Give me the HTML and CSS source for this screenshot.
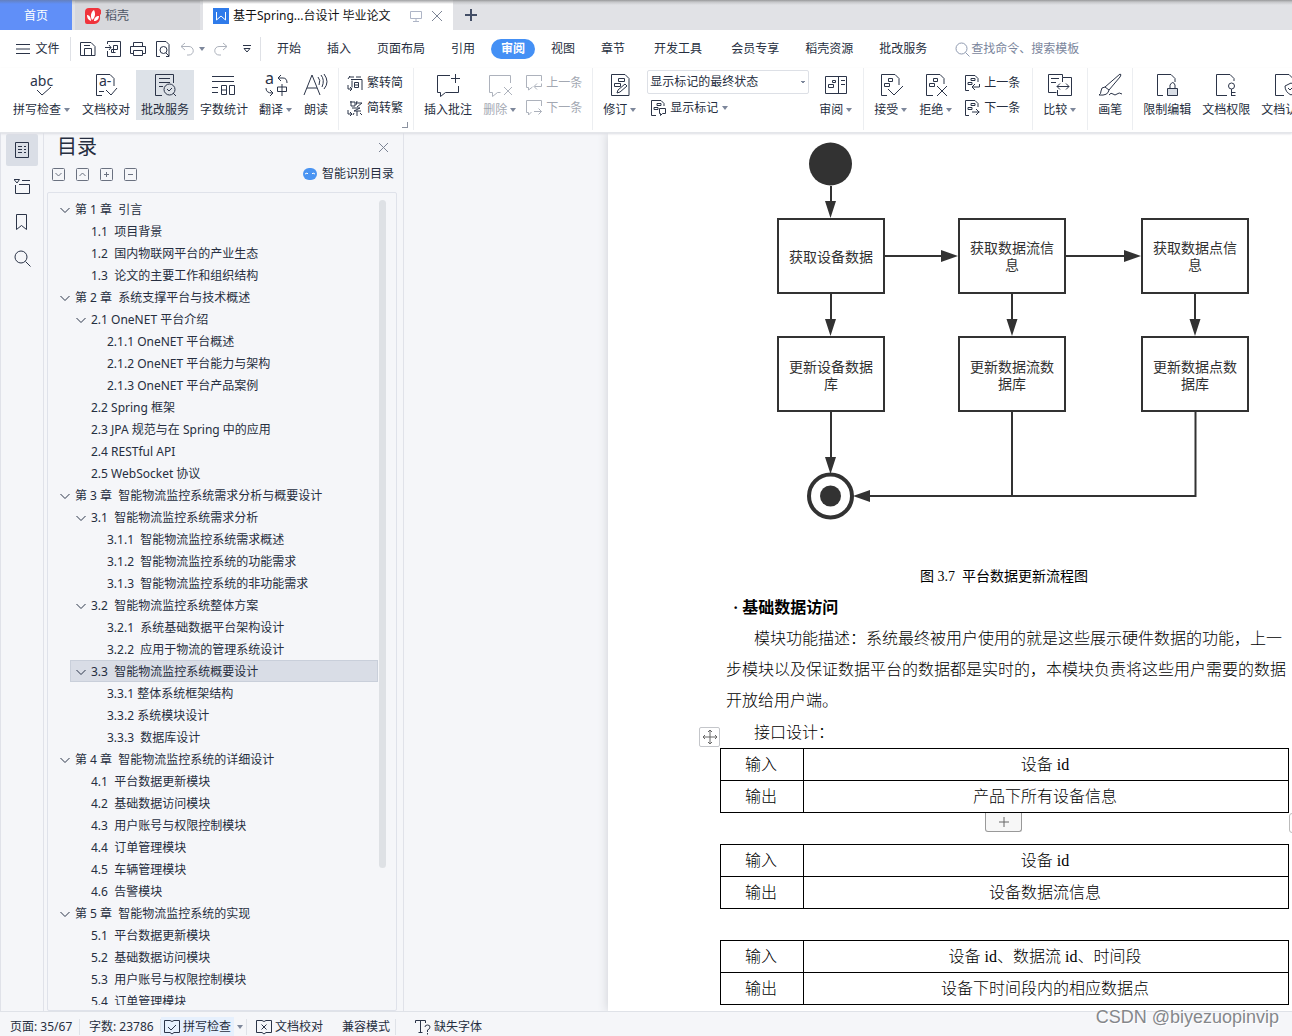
FILE: index.html
```html
<!DOCTYPE html>
<html lang="zh-CN">
<head>
<meta charset="utf-8">
<title>基于Spring...台设计 毕业论文</title>
<link rel="stylesheet" href="styles.css">
</head>
<body>
<svg class="defs" aria-hidden="true">
  <symbol id="chev" viewBox="0 0 10 10"><path d="M.5 3L5 7.500 9.500 3"/></symbol>
  <symbol id="caret" viewBox="0 0 6 4"><path d="M0 0h6L3 4z" fill="#7d879b" stroke="none"/></symbol>
  <symbol id="bubble" viewBox="0 0 24 24"><path d="M14 2.500H1.500v17h3v4l5-4h13V13"/></symbol>
  <symbol id="prev" viewBox="0 0 16 16"><path d="M15.500 6V.500H.500v12h2v2.500l4-3M15.500 8.500v3h-7M11 8.500l-3 3 3 3"/></symbol>
  <symbol id="next" viewBox="0 0 16 16"><path d="M15.500 6V.500H.500v12h2v2.500l3-3M8 11.500h7.500M12.500 8.500l3 3-3 3"/></symbol>
  <symbol id="docprev" viewBox="0 0 16 16"><path d="M5 15.500H1.500V.500H11l3 3V7M7 3.500h4v2H7zM4 7.500h4v2H4zM15.500 9v3H8M11 9l-3 3 3 3"/></symbol>
  <symbol id="docnext" viewBox="0 0 16 16"><path d="M5 15.500H1.500V.500H11l3 3V7M7 3.500h4v2H7zM4 7.500h4v2H4zM8 12h7.500M12 9l3 3-3 3"/></symbol>
</svg>

<header class="tabs">
  <button class="tab home">首页</button>
  <button class="tab docer"><svg width="16" height="16" viewBox="0 0 16 16"><path d="M4 0h8a4 4 0 0 1 3 7v2a6 6 0 0 1-6 7H2a2 2 0 0 1-2-2V4a4 4 0 0 1 4-4z" fill="#f0343c" stroke="none"/><path d="M7 12C5 8 6 4 9 2c2 4 1 8-2 10zM6 13C3 12 2 10 2 7c2 0 4 2 4 6zM9 13c0-3 2-5 5-5 0 3-2 5-5 5z" fill="#fff" stroke="none"/></svg>稻壳</button>
  <div class="tab current"><svg width="16" height="16" viewBox="0 0 16 16"><path d="M0 0h16v16H0z" fill="#2f7bea" stroke="none"/><path d="M3.500 4v8L8 8l4.500 4V4" stroke="#fff"/></svg><span>基于Spring...台设计 毕业论文</span>
    <svg class="screen" width="12" height="12" viewBox="0 0 12 12"><path d="M.5 1.500h11v7H.5zM6 8.500v3M3 11.500h6"/></svg>
    <button class="plain" aria-label="关闭标签"><svg class="gray" width="12" height="12" viewBox="0 0 12 12"><path d="M1 1l10 10M11 1L1 11"/></svg></button></div>
  <button class="plain add" aria-label="新建标签"><svg width="12" height="12" viewBox="0 0 12 12"><path d="M6 0v12M0 6h12" stroke="#434e66" stroke-width="2"/></svg></button>
</header>

<nav class="menu">
  <button class="plain file"><svg width="14" height="12" viewBox="0 0 14 12"><path d="M0 1.500h14M0 6h14M0 10.500h14"/></svg>文件</button>
  <div class="quick">
    <button class="plain" aria-label="保存"><svg width="16" height="16" viewBox="0 0 16 16"><path d="M.500 1.500H11l4 4v9H.500zM4.500 14V7.500h7V14M4 4.500h6"/></svg></button>
    <button class="plain" aria-label="输出为PDF"><svg width="16" height="16" viewBox="0 0 16 16"><path d="M2.500 3V.500h13v15h-13V10M0 6.500h6M4 4l2 2.500L4 9M8.500 12V4.500h4v4h-6v3h4"/></svg></button>
    <button class="plain" aria-label="打印"><svg width="16" height="16" viewBox="0 0 16 16"><path d="M3.500 5V1.500h9V5M3.500 12.500h-3v-7h15v7h-3M3.500 9.500h9v5h-9z"/></svg></button>
    <button class="plain" aria-label="打印预览"><svg width="16" height="16" viewBox="0 0 16 16"><path d="M5 15.500H1.500V.500H11l3 3V15.500h-3"/><circle cx="8.500" cy="9" r="3.500"/><path d="M11 12l3 3"/></svg></button>
    <button class="plain undo" aria-label="撤销"><svg class="dim" width="14" height="14" viewBox="0 0 14 14"><path d="M5 1L1 4.500 5 8M1 4.500h8a4 4 0 0 1 0 8.500H7"/></svg><svg width="6" height="4"><use href="#caret"/></svg></button>
    <button class="plain" aria-label="恢复"><svg class="dim" width="14" height="14" viewBox="0 0 14 14"><path d="M9 1l4 3.500L9 8M13 4.500H5A4 4 0 0 0 5 13h2"/></svg></button>
    <button class="plain more" aria-label="更多"><svg width="8" height="8" viewBox="0 0 8 8"><path d="M0 .500h8M1 3.500h6L4 7z"/></svg></button>
  </div>
  <a href="#">开始</a><a href="#">插入</a><a href="#">页面布局</a><a href="#">引用</a><a href="#" class="on">审阅</a><a href="#">视图</a><a href="#">章节</a><a href="#" class="wide">开发工具</a><a href="#" class="wide">会员专享</a><a href="#">稻壳资源</a><a href="#">批改服务</a>
  <label class="search"><svg width="15" height="15" viewBox="0 0 15 15"><circle cx="6.500" cy="6.500" r="5.500"/><path d="M10.500 10.500l4 4"/></svg><input type="text" placeholder="查找命令、搜索模板"></label>
</nav>

<section class="ribbon">
  <div class="group first">
    <button class="big"><svg viewBox="0 0 24 24"><path d="M7 17l5 5 9-8"/><text x="0" y="13">abc</text></svg><span>拼写检查<svg class="car"><use href="#caret"/></svg></span></button>
    <button class="big"><svg viewBox="0 0 24 24"><path d="M8 22.500H2.500v-21H16l4 4V13M5 18.500h5M12 17l5 5 6-7"/><text x="5" y="13">a-</text></svg><span>文档校对</span></button>
    <button class="big pressed"><svg viewBox="0 0 24 24"><path d="M9 22.500H2.500v-21h18V10M6 5.500h11M6 9.500h11M6 13.500h4"/><circle cx="16.500" cy="16.500" r="5.500"/><path d="M14 16l2 2 3-3M20 20l3 3"/></svg><span>批改服务</span></button>
    <button class="big"><svg viewBox="0 0 24 24"><path d="M0 3.500h22M0 8.500h22M0 14.500h6M0 19.500h6M9.500 12.500h5v9h-5zM9.500 17h5M17.500 12.500h5v9h-5z"/></svg><span>字数统计</span></button>
    <button class="big translate"><svg viewBox="0 0 24 24"><path d="M17 2l-3 3 3 3M14 5h5q4 0 4 5M2 15q0 5 6 5M6 17l3 3-3 3M13.500 14v4.500h9V14zM18 11v12"/><text x="1" y="11">a</text></svg><span>翻译<svg class="car"><use href="#caret"/></svg></span></button>
    <button class="big"><svg viewBox="0 0 24 24"><path d="M0 22L8 2l8 20M3 15h10M14 4q3 3 1 8M17 2q4 5 1 12M20 1q6 8 0 15"/></svg><span>朗读</span></button>
  </div>
  <div class="group corner">
    <div class="stack"><button class="small"><svg viewBox="0 0 16 16"><path d="M3 1L1 4M2 2h5M9 2h5M1 10v4h4M3 12l2 2-2 2M5 5.500v7M4 4.500h11v10.500M7.500 7.500h4v5h-4zM7.500 10h4"/></svg>繁转简</button>
    <button class="small"><svg viewBox="0 0 16 16"><path d="M4 1v5h4V2H3M10 1l-1 4M9 3h6l-5 4M5 8h8L7 11h7M10 11v5M1 10v4h4M3 12l2 2-2 2M7 13l-1 2M13 13l2 2"/></svg>简转繁</button></div>
  </div>
  <div class="group comments">
    <button class="big"><svg viewBox="0 0 24 24"><use href="#bubble"/><path d="M19.500 1v9M15 5.500h9"/></svg><span>插入批注</span></button>
    <button class="big off"><svg viewBox="0 0 24 24"><path d="M22.500 10V2.500H1.500v17h3v4l5-4h3M16 14l8 8M24 14l-8 8"/></svg><span>删除<svg class="car"><use href="#caret"/></svg></span></button>
    <div class="stack"><button class="small off"><svg><use href="#prev"/></svg>上一条</button><button class="small off"><svg><use href="#next"/></svg>下一条</button></div>
  </div>
  <div class="group">
    <button class="big"><svg viewBox="0 0 24 24"><path d="M3.500 1.500H17l4 4v17H3.500zM10.500 5.500h6v3h-6zM6.500 10.500h6v3h-6zM9 20l1-3 7-6 2 2-7 6z"/></svg><span>修订<svg class="car"><use href="#caret"/></svg></span></button>
    <div class="stack marks"><select aria-label="标记状态"><option>显示标记的最终状态</option></select>
    <button class="small"><svg viewBox="0 0 16 16"><path d="M6 15.500H1.500V.500H11l3 3V6M7 3.500h4v2H7zM4 7.500h4v2H4zM9.500 8.500h6v5h-3l-2 2v-2h-1z"/></svg>显示标记<svg class="car"><use href="#caret"/></svg></button></div>
    <button class="big"><svg viewBox="0 0 24 24"><path d="M1.500 3.500h21v17h-21zM14.500 3.500v17M8.500 7.500h3v2h-3zM4.500 11.500h5v3h-5zM17 7.500h4M17 11.500h4"/></svg><span>审阅<svg class="car"><use href="#caret"/></svg></span></button>
  </div>
  <div class="group roomy">
    <button class="big"><svg viewBox="0 0 24 24"><path d="M8 22.500H2.500v-21H16l4 4V12M9.500 5.500h4v3h-4zM5.500 10.500h5v3h-5zM9 16l6 6 9-9"/></svg><span>接受<svg class="car"><use href="#caret"/></svg></span></button>
    <button class="big"><svg viewBox="0 0 24 24"><path d="M9 22.500H2.500v-21H16l4 4V11M9.500 5.500h4v3h-4zM5.500 10.500h5v3h-5zM13 13l10 10M23 13L13 23"/></svg><span>拒绝<svg class="car"><use href="#caret"/></svg></span></button>
    <div class="stack"><button class="small"><svg><use href="#docprev"/></svg>上一条</button><button class="small"><svg><use href="#docnext"/></svg>下一条</button></div>
  </div>
  <div class="group">
    <button class="big"><svg viewBox="0 0 24 24"><path d="M14.500 4.500v-3H.500v18h8M3 5.500h8M3 9.500h5M14.500 9V4.500h9v18h-14V17M9 13.500h12M12 10.500l-3 3 3 3M18 10.500l3 3-3 3"/></svg><span>比较<svg class="car"><use href="#caret"/></svg></span></button>
  </div>
  <div class="group">
    <button class="big"><svg viewBox="0 0 24 24"><path d="M7 14L22 1q2 0 0 3L11 17zM7 14q-4 0-4 4 0 3-2 4 9 1 10-5M11 22q2-3 4-1t4 0 5 0"/></svg><span>画笔</span></button>
  </div>
  <div class="group last">
    <button class="big"><svg viewBox="0 0 24 24"><path d="M8 22.500H2.500v-21H16l4 4V9M15 15v-3q3-5 5 0v3"/><path d="M12.500 15.500h10v7h-10z" fill="#d9dee6"/></svg><span>限制编辑</span></button>
    <button class="big"><svg viewBox="0 0 24 24"><path d="M13 22.500H2.500v-21H16l4 4V8M17.500 16v7M17.500 19.500h4M17.500 22.500h4"/><circle cx="17.500" cy="13" r="3"/></svg><span>文档权限</span></button>
    <button class="big"><svg viewBox="0 0 24 24"><path d="M11 22.500H2.500v-21H16l4 4V9M18 10l6 3q0 6-6 9-6-3-6-9zM15 15l2 2 4-4"/></svg><span>文档认证</span></button>
  </div>
</section>

<main class="work">
  <aside class="rail">
    <button class="plain active" aria-label="目录"><svg width="14" height="16" viewBox="0 0 14 16"><path d="M.500.500h13v15H.500zM3 4.500h4M9 4.500h2M3 7.500h4M9 7.500h2M3 10.500h4M9 10.500h2"/></svg></button>
    <button class="plain" aria-label="导航"><svg width="16" height="16" viewBox="0 0 16 16"><path d="M0 1.500h5.500L3 5zM8 2.500h8M1.500 7v8.500h14v-9H5"/></svg></button>
    <button class="plain" aria-label="书签"><svg width="12" height="17" viewBox="0 0 12 17"><path d="M.500.500h10v15l-5-4-5 4z"/></svg></button>
    <button class="plain" aria-label="查找"><svg width="17" height="17" viewBox="0 0 17 17"><circle cx="7" cy="7" r="6"/><path d="M11.500 11.500l5 5"/></svg></button>
  </aside>

  <aside class="panel">
    <div class="title"><h2>目录</h2><button class="plain" aria-label="关闭"><svg class="gray" width="11" height="11" viewBox="0 0 11 11"><path d="M1 1l9 9M10 1l-9 9"/></svg></button></div>
    <div class="tools">
      <button class="plain" aria-label="展开"><svg viewBox="0 0 13 13"><rect x=".5" y=".5" width="12" height="12" rx="1"/><path d="M3.500 5l3 3 3-3"/></svg></button>
      <button class="plain" aria-label="收起"><svg viewBox="0 0 13 13"><rect x=".5" y=".5" width="12" height="12" rx="1"/><path d="M3.500 8l3-3 3 3"/></svg></button>
      <button class="plain" aria-label="增加"><svg viewBox="0 0 13 13"><rect x=".5" y=".5" width="12" height="12" rx="1"/><path d="M4 6.500h5M6.500 4v5"/></svg></button>
      <button class="plain" aria-label="减少"><svg viewBox="0 0 13 13"><rect x=".5" y=".5" width="12" height="12" rx="1"/><path d="M4 6.500h5"/></svg></button>
      <button class="plain smart"><svg class="bot" viewBox="0 0 14 12"><rect width="14" height="12" rx="6" fill="#4a94f2" stroke="none"/><path d="M2 6l2-1 1 1M9 6l1-1 2 1" stroke="#fff"/></svg>智能识别目录</button>
    </div>
    <div class="tree">
      <ul>
        <li class="l1 open"><svg><use href="#chev"/></svg>第 1 章  引言</li>
        <li class="l2">1.1  项目背景</li>
        <li class="l2">1.2  国内物联网平台的产业生态</li>
        <li class="l2">1.3  论文的主要工作和组织结构</li>
        <li class="l1 open"><svg><use href="#chev"/></svg>第 2 章  系统支撑平台与技术概述</li>
        <li class="l2 open"><svg><use href="#chev"/></svg>2.1 OneNET 平台介绍</li>
        <li class="l3">2.1.1 OneNET 平台概述</li>
        <li class="l3">2.1.2 OneNET 平台能力与架构</li>
        <li class="l3">2.1.3 OneNET 平台产品案例</li>
        <li class="l2">2.2 Spring 框架</li>
        <li class="l2">2.3 JPA 规范与在 Spring 中的应用</li>
        <li class="l2">2.4 RESTful API</li>
        <li class="l2">2.5 WebSocket 协议</li>
        <li class="l1 open"><svg><use href="#chev"/></svg>第 3 章  智能物流监控系统需求分析与概要设计</li>
        <li class="l2 open"><svg><use href="#chev"/></svg>3.1  智能物流监控系统需求分析</li>
        <li class="l3">3.1.1  智能物流监控系统需求概述</li>
        <li class="l3">3.1.2  智能物流监控系统的功能需求</li>
        <li class="l3">3.1.3  智能物流监控系统的非功能需求</li>
        <li class="l2 open"><svg><use href="#chev"/></svg>3.2  智能物流监控系统整体方案</li>
        <li class="l3">3.2.1  系统基础数据平台架构设计</li>
        <li class="l3">3.2.2  应用于物流的管理系统设计</li>
        <li class="l2 open selected"><svg><use href="#chev"/></svg>3.3  智能物流监控系统概要设计</li>
        <li class="l3">3.3.1 整体系统框架结构</li>
        <li class="l3">3.3.2 系统模块设计</li>
        <li class="l3">3.3.3  数据库设计</li>
        <li class="l1 open"><svg><use href="#chev"/></svg>第 4 章  智能物流监控系统的详细设计</li>
        <li class="l2">4.1  平台数据更新模块</li>
        <li class="l2">4.2  基础数据访问模块</li>
        <li class="l2">4.3  用户账号与权限控制模块</li>
        <li class="l2">4.4  订单管理模块</li>
        <li class="l2">4.5  车辆管理模块</li>
        <li class="l2">4.6  告警模块</li>
        <li class="l1 open"><svg><use href="#chev"/></svg>第 5 章  智能物流监控系统的实现</li>
        <li class="l2">5.1  平台数据更新模块</li>
        <li class="l2">5.2  基础数据访问模块</li>
        <li class="l2">5.3  用户账号与权限控制模块</li>
        <li class="l2">5.4  订单管理模块</li>
      </ul>
      <div class="thumb"></div>
    </div>
  </aside>

  <section class="canvas">
    <article class="page">
      <svg class="flow" width="476" height="380" viewBox="776 142 476 380">
        <g fill="#323232" stroke="none">
          <circle cx="830.500" cy="164" r="21.500"/><circle cx="830.500" cy="496" r="10.500"/>
          <path d="M825 201h11l-5.500 17zM825 319h11l-5.500 17zM825 457h11l-5.500 17zM1006.500 319h11l-5.500 17zM1189.500 319h11l-5.500 17zM941 250v12l17-6zM1124 250v12l17-6zM870 490v12l-17-6z"/>
        </g>
        <g fill="none" stroke="#323232" stroke-width="2">
          <circle cx="830.500" cy="496" r="21.500" stroke-width="4"/>
          <path d="M831 186v20M831 294v30M831 412v50M1012 294v30M1195 294v30M885 256h60M1066 256h60M1012 412v84M1195.500 412v84H860"/>
          <path d="M778 219h106v74H778zM959 219h106v74H959zM1142 219h106v74h-106zM778 337h106v74H778zM959 337h106v74H959zM1142 337h106v74h-106z"/>
        </g>
        <g class="nodes">
          <text x="831" y="262">获取设备数据</text>
          <text x="1012" y="253">获取数据流信</text><text x="1012" y="270">息</text>
          <text x="1195" y="253">获取数据点信</text><text x="1195" y="270">息</text>
          <text x="831" y="372">更新设备数据</text><text x="831" y="389">库</text>
          <text x="1012" y="372">更新数据流数</text><text x="1012" y="389">据库</text>
          <text x="1195" y="372">更新数据点数</text><text x="1195" y="389">据库</text>
        </g>
      </svg>
      <p class="caption">图 3.7  平台数据更新流程图</p>
      <h3>· 基础数据访问</h3>
      <p class="body">模块功能描述：系统最终被用户使用的就是这些展示硬件数据的功能，上一步模块以及保证数据平台的数据都是实时的，本模块负责将这些用户需要的数据开放给用户端。</p>
      <p class="body">接口设计：</p>
      <div class="tablebox">
        <table><tr><th>输入</th><td>设备 id</td></tr><tr><th>输出</th><td>产品下所有设备信息</td></tr></table>
        <button class="plain move" aria-label="移动表格"><svg width="16" height="16" viewBox="0 0 16 16"><path d="M8 1v14M1 8h14M6 3l2-2 2 2M6 13l2 2 2-2M3 6L1 8l2 2M13 6l2 2-2 2"/></svg></button>
        <button class="plain addrow" aria-label="添加行"><svg width="10" height="10" viewBox="0 0 10 10"><path d="M5 0v10M0 5h10"/></svg></button>
        <i class="grip"></i>
      </div>
      <div class="tablebox"><table><tr><th>输入</th><td>设备 id</td></tr><tr><th>输出</th><td>设备数据流信息</td></tr></table></div>
      <div class="tablebox"><table><tr><th>输入</th><td>设备 id、数据流 id、时间段</td></tr><tr><th>输出</th><td>设备下时间段内的相应数据点</td></tr></table></div>
    </article>
  </section>
</main>

<footer class="status">
  <span class="cell pageno">页面: 35/67</span>
  <span class="cell words">字数: 23786</span>
  <button class="plain spell"><svg width="16" height="16" viewBox="0 0 16 16"><path d="M8 2.500L6 1.500H.500v12H6l2 1.500 2-1.500h5.500v-12H10zM4 8l3 3 5-5"/></svg>拼写检查</button>
  <button class="plain drop" aria-label="拼写选项"><svg width="6" height="4"><use href="#caret"/></svg></button>
  <button class="plain proof"><svg width="16" height="16" viewBox="0 0 16 16"><path d="M8 2.500L6 1.500H.500v12H6l2 1.500 2-1.500h5.500v-12H10zM5.500 5.500l5 5M10.500 5.500l-5 5"/></svg>文档校对</button>
  <span class="cell compat">兼容模式</span>
  <button class="plain fonts"><svg width="16" height="16" viewBox="0 0 16 16"><path d="M.500 4V1.500h10V4M5.500 1.500v12M3.500 13.500h4M10 8q0-2 2.500-2t2.500 2q0 2-2.500 3v2M12.500 14v1.500"/></svg>缺失字体</button>
  <span class="mark">CSDN @biyezuopinvip</span>
</footer>
</body>
</html>
```
FILE: styles.css
```css
* { box-sizing: border-box; }
body {
  margin: 0;
  height: 100vh;
  display: flex;
  flex-direction: column;
  overflow: hidden;
  background: #f5f6f9;
  color: #262e40;
  font: 12px/16px "Noto Sans", "Noto Sans CJK SC", sans-serif;
}
button, input, select { font: inherit; color: inherit; }
button { border: 0; padding: 0; background: none; white-space: nowrap; }
svg { flex: none; fill: none; stroke: #2b3448; }
.defs { position: absolute; width: 0; height: 0; }
.plain { display: flex; align-items: center; justify-content: center; }
.dim { stroke: #adb2bc; }
.gray { stroke: #7c8495; }

/* window tabs */
.tabs {
  display: flex;
  flex: none;
  height: 30px;
  gap: 3px;
  background: linear-gradient(#97989a, #c5c6c9 2px, #e1e2e6 5px);
}
.tab { display: flex; align-items: center; gap: 4px; padding: 2px 10px 0; }
.home { width: 72px; justify-content: center; color: #fff; background: linear-gradient(#6480bd, #608ff8 4px); }
.docer { width: 125px; color: #4d5565; background: linear-gradient(#97989a, #d7d8dc 4px); }
.current { width: 250px; color: #111; background: linear-gradient(#a0a1a3, #fff 4px); }
.current span { flex: 1; white-space: nowrap; }
.current .screen { margin-right: 5px; stroke: #aeb5c6; }
.add { width: 30px; }

/* menu row */
.menu { display: flex; flex: none; align-items: center; height: 38px; background: #fff; }
.file { width: 71px; height: 24px; gap: 5px; padding-left: 6px; border-right: 1px solid #dfe1e6; }
.quick { display: flex; align-items: center; width: 190px; height: 24px; gap: 9px; padding-left: 9px; border-right: 1px solid #dfe1e6; }
.undo { gap: 5px; }
.more { margin-left: 6px; }
.menu a { color: inherit; text-decoration: none; padding: 0 13px; white-space: nowrap; }
.menu .quick + a { padding-left: 16px; }
.menu a.on { margin: 0 3px; padding: 2px 10px; border-radius: 10px; background: #4490f5; color: #fff; font-weight: bold; }
.menu a.wide { padding-left: 16px; }
.search { display: flex; align-items: center; gap: 1px; margin-left: 15px; color: #7a859c; }
.search svg { stroke: #8f9ab0; }
.search input { width: 120px; border: 0; padding: 0; background: none; outline: 0; }
.search input::placeholder { color: #7a859c; opacity: 1; }

/* ribbon */
.ribbon { display: flex; flex: none; height: 65px; overflow: hidden; background: #fff; border-bottom: 1px solid #e4e6ea; box-shadow: 0 1px 2px #dcdee3; z-index: 1; }
.group { display: flex; flex: none; gap: 1px; height: 62px; padding: 2px 5px 0; border-right: 1px solid #eceef1; }
.first { padding-left: 8px; }
.last { border: 0; }
.comments { padding-right: 7px; }
.roomy { padding-right: 7px; }
.roomy .stack { padding: 0 2px; }
.big { display: flex; flex-direction: column; align-items: center; gap: 5px; height: 50px; padding: 3px 5px 0; }
.big > svg { width: 24px; height: 24px; overflow: visible; }
.big span { display: flex; align-items: center; }
.big text { font-size: 14px; fill: #2b3448; stroke: none; }
.big.translate text { font-size: 16px; }
.pressed { background: #dde2e8; }
.car { width: 6px; height: 4px; margin: 0 1px 0 3px; }
.stack { display: flex; flex-direction: column; align-items: flex-start; }
.small { display: flex; align-items: center; gap: 4px; height: 25px; padding: 1px 3px 0; }
.small > svg:first-child { width: 16px; height: 16px; }
.small .car { margin: 0; }
.off { color: #a3a8b2; }
.off > svg { stroke: #adb2bc; }
.corner { position: relative; padding-right: 7px; }
.corner::after { content: ""; position: absolute; right: 5px; bottom: 2px; width: 5px; height: 5px; border: solid #8b92a0; border-width: 0 1px 1px 0; }
.marks { padding: 0 4px; }
.marks .small { height: 27px; }
select {
  width: 162px;
  height: 24px;
  padding: 0 2px;
  border: 1px solid #dde0e6;
  border-radius: 2px;
  appearance: none;
  background: linear-gradient(45deg, transparent 50%, #7d879b 50%) 151px 10px / 3px 3px no-repeat, linear-gradient(-45deg, transparent 50%, #7d879b 50%) 154px 10px / 3px 3px no-repeat, #fff;
  background:
    conic-gradient(from -45deg at 50% 100%, #7d879b 90deg, transparent 0) 152px 10px / 6px 3px no-repeat,
    #fff;
}

/* side panels */
.work { display: flex; flex: 1; min-height: 0; }
.rail { display: flex; flex-direction: column; align-items: center; gap: 4px; width: 44px; padding-top: 1px; border: solid #e0e2e9; border-width: 0 1px; }
.rail button { width: 32px; height: 32px; border-radius: 2px; }
.rail .active { background: #dadee6; }
.panel { display: flex; flex-direction: column; width: 360px; padding: 0 6px 0 3px; border-right: 1px solid #e0e2e9; }
.title { display: flex; align-items: center; justify-content: space-between; height: 28px; padding: 0 8px 0 10px; }
.title h2 { margin: 0; font-size: 20px; line-height: 28px; font-weight: normal; }
.tools { display: flex; align-items: center; gap: 11px; height: 26px; padding: 0 3px 0 5px; margin-bottom: 5px; }
.tools svg { width: 13px; height: 13px; stroke: #6a7180; }
.tools .smart { gap: 5px; margin-left: auto; }
.tools .bot { width: 14px; height: 12px; }
.tree { position: relative; flex: 1; min-height: 0; padding: 5px 18px 5px 8px; border: 1px solid #dfe2ea; border-radius: 2px; }
.tree ul { height: 100%; margin: 0; padding: 0; overflow: hidden; list-style: none; }
.tree li { display: flex; align-items: center; height: 22px; margin-left: 14px; padding-top: 2px; border: 1px solid transparent; white-space: pre; }
.tree li svg { width: 10px; height: 10px; margin-right: 5px; }
.tree .l1 { margin-left: 3px; }
.l2 { padding-left: 20px; }
.l3 { padding-left: 36px; }
.l2.open { padding-left: 5px; }
.tree .selected { background: #d9dde6; border-color: #c9cfda; }
.thumb { position: absolute; top: 7px; right: 10px; width: 7px; height: 668px; border-radius: 4px; background: #dee1e5; }

/* document */
.canvas { flex: 1; min-width: 0; padding-left: 204px; overflow: hidden; }
.page { height: 100%; padding: 9px 6px 0 118px; background: #fff; color: #000; font: 300 16px/31px "Liberation Serif", "Noto Sans CJK SC", serif; box-shadow: 0 0 10px #ccced3; }
.page p, .page h3 { margin: 0; }
.flow { display: block; margin-left: 50px; }
.nodes text { fill: #323232; stroke: none; font: 14px "Noto Sans CJK SC", sans-serif; text-anchor: middle; }
.page .caption { margin-top: 39px; padding-right: 4px; font-size: 14px; font-weight: 400; text-align: center; white-space: pre; }
.page h3 { padding-left: 7px; font-size: 16px; font-weight: bold; }
.page .body { text-indent: 28px; }
.page .body + .body { margin-top: 1px; }
.tablebox { position: relative; margin: 0 -3px 31px -6px; }
table { width: 100%; border-collapse: collapse; table-layout: fixed; }
td, th { height: 32px; padding: 0 2px 0 0; border: 1px solid #000; text-align: center; font-weight: 300; }
th { width: 83px; }
.move { position: absolute; left: -21px; top: -21px; width: 21px; height: 20px; border: 1px solid #c4c6ca; border-radius: 2px; background: #fff; }
.move svg, .addrow svg { stroke: #666; }
.addrow { position: absolute; left: 265px; top: 65px; width: 37px; height: 19px; border: 1px solid #999; border-top: 0; border-radius: 0 0 3px 3px; background: #f7f7f7; }
.grip { position: absolute; right: -10px; top: 65px; width: 10px; height: 20px; border: 1px solid #bbb; border-radius: 3px; }

/* status bar */
.status { position: relative; display: flex; flex: none; align-items: center; height: 25px; padding-top: 6px; border-top: 1px solid #dfe2e8; background: #f5f6f9; white-space: nowrap; }
.status button { gap: 3px; }
.cell { border-right: 1px solid #dfe2e8; }
.pageno { width: 80px; padding-left: 10px; }
.words { width: 81px; padding-left: 9px; }
.spell { width: 73px; height: 20px; background: #e6f0fd; }
.drop { width: 13px; height: 16px; border-right: 1px solid #dfe2e8; }
.proof { margin-left: 9px; }
.compat { padding: 0 5px 0 19px; }
.fonts { margin-left: 19px; }
.mark { position: absolute; right: 13px; top: -7px; color: #85878b; font: 18px/24px "Liberation Sans", sans-serif; text-shadow: 1px 1px #fff; }
```
